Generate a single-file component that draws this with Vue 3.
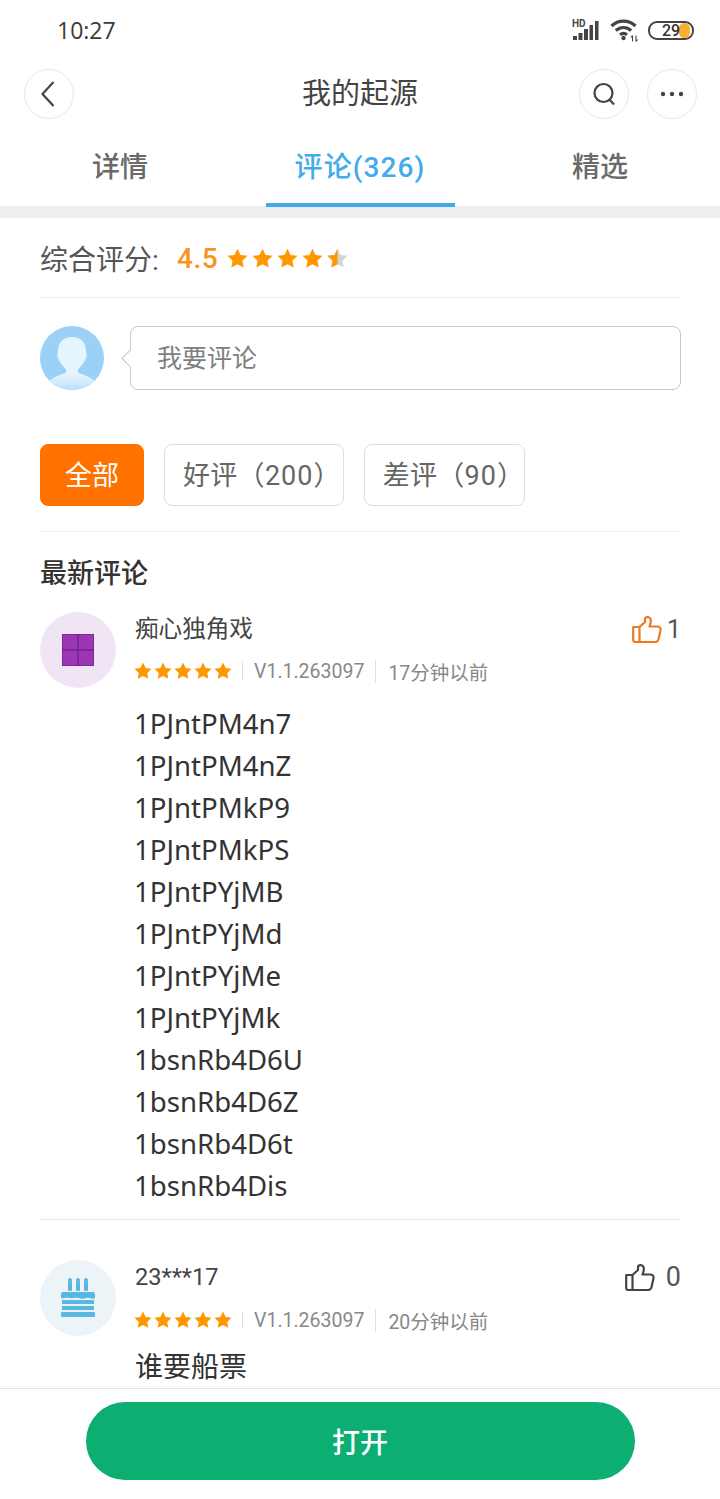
<script setup>
const ids = ['1PJntPM4n7','1PJntPM4nZ','1PJntPMkP9','1PJntPMkPS','1PJntPYjMB','1PJntPYjMd','1PJntPYjMe','1PJntPYjMk','1bsnRb4D6U','1bsnRb4D6Z','1bsnRb4D6t','1bsnRb4Dis']
const starPath = 'M10 0.6l2.9 6 6.6.9-4.8 4.6 1.2 6.500L10 15.500l-5.900 3.100 1.200-6.500L.5 7.500l6.600-.9z'
const thumb = 'M7.500 11L13 6V3.200C13 .8 17.500 .3 18.500 3c.8 2.200 0 5-1 7.500H25c2.500 0 4 1.500 3.500 3.800l-2 9C26 25 25 26 23 26H7.500zM1.200 11h6.300v15H3.200c-1.200 0-2-.8-2-2z'
</script>

<template>
  <div class="page">
    <div class="status">
      <span class="time">10:27</span>
      <div class="status-icons">
        <svg class="sig" width="30" height="22" viewBox="0 0 30 22">
          <text x="0" y="8" class="hd">HD</text>
          <g fill="#444">
            <rect x="1" y="17" width="4" height="4" />
            <rect x="6.500" y="14" width="4" height="7" />
            <rect x="12" y="10" width="4" height="11" />
            <rect x="17.500" y="6" width="3.500" height="15" />
            <rect x="23" y="2" width="3.500" height="19" />
          </g>
        </svg>
        <svg class="wifi" width="30" height="24" viewBox="0 0 30 24">
          <g fill="none" stroke="#444" stroke-width="3.200">
            <path d="M1.500 8C8.500 1.500 18.500 1.500 25.500 8" />
            <path d="M5.800 12.500C10.500 8.500 16.500 8.500 21.200 12.500" />
            <path d="M10 16.800C12.500 14.800 14.500 14.800 17 16.800" />
          </g>
          <circle cx="13.500" cy="20" r="2.200" fill="#444" />
          <path d="M22.500 17.500v6M26 17.500v6M20.800 19.500l1.700-2M27.700 21.500l-1.700 2" stroke="#444" stroke-width="1.100" fill="none" />
        </svg>
        <div class="battery">
          <span class="batt-fill"></span>
          <span class="batt-num">29</span>
        </div>
      </div>
    </div>

    <div class="nav">
      <button class="circle">
        <svg width="20" height="28" viewBox="0 0 20 28"><path d="M14.500 2L3.500 14l11 12" fill="none" stroke="#444" stroke-width="2.200" /></svg>
      </button>
      <h1 class="title">我的起源</h1>
      <div class="nav-right">
        <button class="circle">
          <svg width="26" height="26" viewBox="0 0 26 26"><circle cx="12.500" cy="12" r="9" fill="none" stroke="#444" stroke-width="2.200" /><path d="M18.500 18.500L23 23.500" stroke="#444" stroke-width="2.200" fill="none" /></svg>
        </button>
        <button class="circle">
          <svg width="24" height="6" viewBox="0 0 24 6"><circle cx="3" cy="3" r="2.200" fill="#444" /><circle cx="12" cy="3" r="2.200" fill="#444" /><circle cx="21" cy="3" r="2.200" fill="#444" /></svg>
        </button>
      </div>
    </div>

    <div class="tabs">
      <div class="tab"><span class="tab-label">详情</span></div>
      <div class="tab active"><span class="tab-label">评论(326)</span></div>
      <div class="tab"><span class="tab-label">精选</span></div>
    </div>
    <div class="band"></div>

    <div class="content">
      <div class="rating">
        <span class="rating-label">综合评分:</span>
        <span class="rating-num">4.5</span>
        <div class="rating-stars">
          <svg v-for="n in 4" :key="n" width="21" height="21" viewBox="0 0 20 20"><path :d="starPath" fill="#ff9800" /></svg>
          <svg width="21" height="21" viewBox="0 0 20 20">
            <path :d="starPath" fill="#d5d5d5" />
            <path d="M10 .6V15.500L4.100 18.600l1.200-6.500L.5 7.500l6.600-.9z" fill="#ff9800" />
          </svg>
        </div>
      </div>

      <div class="compose">
        <svg class="me" width="64" height="64" viewBox="0 0 64 64">
          <defs>
            <clipPath id="meclip"><circle cx="32" cy="32" r="32" /></clipPath>
            <linearGradient id="shoulder" x1="0" y1="0" x2="0" y2="1">
              <stop offset="0" stop-color="#e8f5fe" />
              <stop offset="1" stop-color="#b9def9" />
            </linearGradient>
          </defs>
          <circle cx="32" cy="32" r="32" fill="#9bd0f7" />
          <g clip-path="url(#meclip)">
            <path d="M8 56c5-5 12-7 17-9h14c5 2 12 4 17 9l-6 10H14z" fill="url(#shoulder)" />
            <path d="M32 11c-9 0-14 6-14 14 0 2-1.500 4-.5 6 1.500 4 5 9 8.500 12v5c3 2 9 2 12 0v-5c3.500-3 7-8 8.500-12 1-2-.5-4-.5-6 0-8-5-14-14-14z" fill="#e6f4fe" />
          </g>
        </svg>
        <div class="bubble">我要评论</div>
      </div>

      <div class="filters">
        <span class="chip on">全部</span>
        <span class="chip good">好评（<span class="digits">200</span>）</span>
        <span class="chip bad">差评（<span class="digits">90</span>）</span>
      </div>

      <h2 class="latest">最新评论</h2>

      <article class="comment first">
        <div class="avatar purple">
          <svg width="32" height="32" viewBox="0 0 32 32">
            <rect x="0.500" y="0.500" width="31" height="31" fill="#9c36b5" stroke="#7b2a96" />
            <path d="M16 0v32M0 16h32" stroke="#6f2590" stroke-width="1.500" />
          </svg>
        </div>
        <div class="body">
          <div class="name">痴心独角戏</div>
          <div class="meta">
            <div class="stars">
              <svg v-for="n in 5" :key="n" class="s" width="18" height="18" viewBox="0 0 20 20"><path :d="starPath" fill="#ff9800" /></svg>
            </div>
            <span class="ver">V1.1.263097</span>
            <span class="ago">17分钟以前</span>
          </div>
          <div class="text">
            <div v-for="id in ids" :key="id" class="line">{{ id }}</div>
          </div>
        </div>
        <div class="like liked">
          <svg width="30" height="27" viewBox="0 0 30 27"><path :d="thumb" fill="none" stroke="#ee7a1f" stroke-width="2.200" stroke-linejoin="round" /></svg>
          <span>1</span>
        </div>
      </article>

      <article class="comment second">
        <div class="avatar teal">
          <svg width="36" height="42" viewBox="0 0 36 42">
            <g fill="#56b8e3">
              <rect x="8" y="4" width="4" height="10" rx="1" />
              <rect x="16" y="4" width="4" height="10" rx="1" />
              <rect x="24" y="4" width="4" height="10" rx="1" />
              <circle cx="10" cy="3" r="2" />
              <circle cx="18" cy="3" r="2" />
              <circle cx="26" cy="3" r="2" />
              <path d="M3 15h30c1 0 2 1 2 2v4c-3 2-5-1-8.500 0-3 1-5 1-8.500 0-3-1-6 1-8.500 0C6 20 4 22 1 21v-4c0-1 1-2 2-2z" />
              <rect x="2" y="23" width="32" height="4" />
              <rect x="2" y="29" width="32" height="4" />
              <rect x="1" y="35" width="34" height="5" rx="1" />
            </g>
          </svg>
        </div>
        <div class="body">
          <div class="name">23***17</div>
          <div class="meta">
            <div class="stars">
              <svg v-for="n in 5" :key="n" class="s" width="18" height="18" viewBox="0 0 20 20"><path :d="starPath" fill="#ff9800" /></svg>
            </div>
            <span class="ver">V1.1.263097</span>
            <span class="ago">20分钟以前</span>
          </div>
          <div class="text"><div class="line cn">谁要船票</div></div>
        </div>
        <div class="like">
          <svg width="30" height="27" viewBox="0 0 30 27"><path :d="thumb" fill="none" stroke="#444" stroke-width="2.200" stroke-linejoin="round" /></svg>
          <span>0</span>
        </div>
      </article>
    </div>

    <div class="bottom">
      <button class="open">打开</button>
    </div>
  </div>
</template>

<style>
html, body { margin: 0; background: #fff; }
</style>

<style scoped>
.page {
  width: 720px;
  height: 1499px;
  display: flex;
  flex-direction: column;
  overflow: hidden;
  background: #fff;
  font-family: "Roboto", "Noto Sans CJK SC", sans-serif;
  color: #333;
}
.status {
  height: 60px;
  flex: none;
  display: flex;
  justify-content: space-between;
  align-items: center;
  padding: 0 26px 0 57px;
}
.time { font-size: 23px; color: #3a3a3a; font-family: "Open Sans", sans-serif; }
.status-icons { display: flex; align-items: center; gap: 8px; }
.hd { font: 700 10px "Roboto", sans-serif; fill: #444; }
.battery {
  position: relative;
  width: 42px;
  height: 15px;
  border: 2px solid #444;
  border-radius: 9px;
  overflow: hidden;
  text-align: center;
}
.batt-fill { position: absolute; right: 2px; top: 0; bottom: 0; width: 11px; background: #f7b030; border-radius: 6px; }
.batt-num { position: relative; font-size: 16px; font-weight: 500; line-height: 15px; display: block; color: #333; }
.nav {
  height: 50px;
  flex: none;
  margin-top: 9px;
  padding: 0 23px 0 24px;
  display: flex;
  align-items: center;
  justify-content: space-between;
  position: relative;
}
.circle {
  width: 50px;
  height: 50px;
  padding: 0;
  box-sizing: border-box;
  border: 1px solid #e6e6e6;
  border-radius: 50%;
  background: #fff;
  display: flex;
  align-items: center;
  justify-content: center;
}
.title {
  margin: 0;
  font-size: 29px;
  font-weight: 400;
  color: #444;
  position: absolute;
  left: 0;
  right: 0;
  text-align: center;
  line-height: 52px;
}
.nav-right { display: flex; gap: 18px; position: relative; }
.tabs {
  flex: none;
  height: 87px;
  display: grid;
  grid-template-columns: repeat(3, 240px);
}
.tab {
  font-size: 28px;
  line-height: 98px;
  text-align: center;
  color: #6a6a6a;
  font-weight: 500;
}
.tab.active {
  width: 189px;
  justify-self: center;
  color: #41abec;
  border-bottom: 4px solid #41abec;
  box-sizing: border-box;
  height: 88px;
  position: relative;
  letter-spacing: 1.1px;
  white-space: nowrap;
}
.band { height: 12px; flex: none; background: #eeeeee; }
.content { flex: 1; min-height: 0; overflow: hidden; padding: 0 39px 0 40px; }
.rating {
  height: 80px;
  display: flex;
  align-items: center;
  border-bottom: 1px solid #eeeeee;
  box-sizing: border-box;
}
.rating-label { font-size: 28px; color: #555; width: 137px; white-space: nowrap; }
.rating-num { font-size: 28px; color: #f7931e; font-weight: 500; margin-right: 9px; letter-spacing: .5px; line-height: 32px; margin-top: 2px; }
.rating-stars { display: flex; gap: 4px; margin-top: 2px; }
.rating-stars svg { flex: none; }
.compose { display: flex; align-items: center; margin-top: 28px; gap: 26px; }
.me { flex: none; }
.bubble {
  flex: 1;
  height: 64px;
  box-sizing: border-box;
  border: 1px solid #c8c8c8;
  border-radius: 8px;
  padding-left: 26px;
  font-size: 25px;
  line-height: 64px;
  color: #808080;
  position: relative;
}
.bubble::before {
  content: "";
  position: absolute;
  left: -7px;
  top: 25px;
  width: 12px;
  height: 12px;
  background: #fff;
  border-left: 1px solid #c8c8c8;
  border-bottom: 1px solid #c8c8c8;
  transform: rotate(45deg);
}
.filters {
  display: flex;
  gap: 20px;
  margin-top: 54px;
  padding-bottom: 25px;
  border-bottom: 1px solid #eeeeee;
}
.chip {
  height: 62px;
  box-sizing: border-box;
  border: 1px solid #ddd;
  border-radius: 8px;
  padding: 0 18px;
  font-size: 27px;
  line-height: 63px;
  color: #666;
  letter-spacing: .3px;
  white-space: nowrap;
}
.digits { letter-spacing: 1px; }
.chip.good { padding-right: 1.9px; }
.chip.bad { padding-right: 0; }
.chip.on {
  background: #ff7200;
  border-color: #ff7200;
  color: #fff;
  padding: 0 24px;
  letter-spacing: 0;
}
.latest {
  margin: 24px 0 0;
  font-size: 27px;
  font-weight: 500;
  line-height: 36px;
  color: #333;
}
.comment { display: flex; position: relative; }
.comment.first { margin-top: 20px; padding-bottom: 13px; border-bottom: 1px solid #e8e8e8; }
.comment.second { margin-top: 40px; }
.avatar {
  flex: none;
  width: 76px;
  height: 76px;
  border-radius: 50%;
  display: flex;
  align-items: center;
  justify-content: center;
  margin-right: 19px;
}
.avatar.purple { background: #f0e5f5; }
.avatar.teal { background: #ecf4f7; }
.body { flex: 1; min-width: 0; }
.name { font-size: 23.6px; line-height: 34px; color: #444; }
.meta { display: flex; align-items: center; margin-top: 15px; height: 20px; font-size: 19.5px; color: #888; white-space: nowrap; }
.second .meta { margin-top: 16px; }
.stars { display: flex; flex: none; gap: 2px; width: 98px; margin-left: -1px; padding-right: 10px; border-right: 1px solid #e0e0e0; margin-right: 11px; }
.s { flex: none; }
.ver { padding-right: 11px; border-right: 1px solid #e0e0e0; margin-right: 12px; }
.text { margin-top: 21px; }
.line { font-size: 27.6px; line-height: 42px; color: #333; margin-left: -1px; font-family: "Noto Sans", "Noto Sans CJK SC", sans-serif; }
.line.cn { margin-top: 12px; margin-left: 0; font-size: 28px; line-height: 30px; }
.like {
  position: absolute;
  right: 0;
  top: 3px;
  display: flex;
  align-items: center;
  gap: 11px;
  font-size: 27px;
  color: #555;
}
.second .like { top: 1px; }
.like.liked { gap: 5px; font-size: 25px; }
.bottom {
  flex: none;
  height: 111px;
  box-sizing: border-box;
  border-top: 1px solid #e4e4e4;
  display: flex;
  justify-content: center;
  padding-top: 13px;
  background: #fff;
}
.open {
  width: 549px;
  height: 78px;
  border: 0;
  border-radius: 39px;
  background: #0cae72;
  color: #fff;
  font: 500 28px "Noto Sans CJK SC", sans-serif;
}
</style>
